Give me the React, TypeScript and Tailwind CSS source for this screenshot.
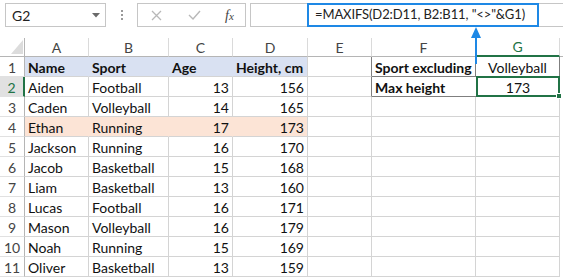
import React from "react"

type Row = { name: string; sport: string; age: number; height: number; peach?: boolean }

const rows: Row[] = [
    { name: "Aiden", sport: "Football", age: 13, height: 156 },
    { name: "Caden", sport: "Volleyball", age: 14, height: 165 },
    { name: "Ethan", sport: "Running", age: 17, height: 173, peach: true },
    { name: "Jackson", sport: "Running", age: 16, height: 170 },
    { name: "Jacob", sport: "Basketball", age: 15, height: 168 },
    { name: "Liam", sport: "Basketball", age: 13, height: 160 },
    { name: "Lucas", sport: "Football", age: 16, height: 171 },
    { name: "Mason", sport: "Volleyball", age: 16, height: 179 },
    { name: "Noah", sport: "Running", age: 15, height: 169 },
    { name: "Oliver", sport: "Basketball", age: 13, height: 159 },
]

const font = { fontFamily: "Lato, 'Liberation Sans', sans-serif" }

/** Top bar: name box, buttons and formula input */
function FormulaBar() {
    return (
        <div className="relative flex h-[38px] items-start bg-white pt-[3px]">
            {/* name box */}
            <div className="ml-[5px] flex h-[24px] w-[101px] items-center justify-between border border-[#c6c6c6] pl-[6px] pr-[5px] text-[14px] text-[#222]">
                <span>G2</span>
                <svg width="8" height="5" viewBox="0 0 8 5"><path d="M0 0h8L4 4.5z" fill="#6a6a6a" /></svg>
            </div>
            <div className="flex h-[24px] w-[31px] flex-col items-center justify-center gap-[2px]">
                <span className="h-[2px] w-[2px] bg-[#9a9a9a]" />
                <span className="h-[2px] w-[2px] bg-[#9a9a9a]" />
                <span className="h-[2px] w-[2px] bg-[#9a9a9a]" />
            </div>
            {/* cancel / enter / fx */}
            <div className="flex h-[24px] w-[109px] items-center border border-[#c6c6c6]">
                <svg className="ml-[13px]" width="11" height="11" viewBox="0 0 11 11">
                    <path d="M1 1l9 9M10 1l-9 9" stroke="#b8b8b8" strokeWidth="1.3" />
                </svg>
                <svg className="ml-[26px]" width="13" height="10" viewBox="0 0 13 10">
                    <path d="M1 5l4 4 7-8" stroke="#b8b8b8" strokeWidth="1.4" fill="none" />
                </svg>
                <span
                    className="ml-[24px] text-[14px] italic text-[#444]"
                    style={{ fontFamily: "'Liberation Serif', serif" }}
                >
                    f<span className="text-[11px]">x</span>
                </span>
            </div>
            {/* formula input */}
            <div className="ml-[4px] flex h-[24px] flex-1 items-center border border-r-0 border-[#c6c6c6] pl-[56px]">
                <div className="flex h-[24px] w-[232px] items-center whitespace-nowrap border-2 border-[#1e88e5] pl-[6px] text-[13px] tracking-[-0.1px] text-[#222]">
                    =MAXIFS(D2:D11, B2:B11, "&lt;&gt;"&amp;G1)
                </div>
            </div>
            {/* arrow pointing from G1 to the formula */}
            <svg className="absolute left-[470px] top-[27px] z-10" width="12" height="37" viewBox="0 0 12 37">
                <path d="M6 0L11 11H1z" fill="#1e88e5" />
                <rect x="5" y="9" width="2" height="28" fill="#1e88e5" />
            </svg>
        </div>
    )
}

const widths = [64, 80, 64, 75, 64, 104, 84]
const letters = ["A", "B", "C", "D", "E", "F", "G"]

function ColumnHeader() {
    return (
        <div className="flex h-[19px]">
            <div className="relative h-[19px] w-[25px] border-r border-b border-[#b5b5b5]">
                <svg className="absolute left-[11px] top-[2px]" width="12" height="14" viewBox="0 0 12 14">
                    <path d="M12 0V14H0z" fill="#dcdcdc" />
                </svg>
            </div>
            {letters.map((l, i) => (
                <div
                    key={l}
                    style={{ width: widths[i] }}
                    className={`flex h-[19px] items-center justify-center border-r border-[#dadada] text-[14px] ${l === "G"
                            ? "border-b-2 border-b-[#217346] text-[#217346]"
                            : "border-b border-b-[#b5b5b5] text-[#444]"
                        }`}
                >
                    {l}
                </div>
            ))}
            <div className="h-[19px] flex-1 border-b border-[#b5b5b5]" />
        </div>
    )
}

function Cell({
    w,
    children,
    className = "",
}: {
    w: number
    children?: React.ReactNode
    className?: string
}) {
    return (
        <div
            style={{ width: w }}
            className={`flex h-[20px] items-center overflow-visible whitespace-nowrap border-b border-r border-[#d4d4d4] px-[3px] pt-[1px] text-[14px] text-[#111] ${className}`}
        >
            {children}
        </div>
    )
}

function RowNum({ n, active }: { n: number; active?: boolean }) {
    return (
        <div
            className={`flex h-[20px] w-[25px] items-center justify-center border-b border-[#e1e1e1] pt-[1px] text-[14px] ${active
                    ? "border-r-2 border-r-[#217346] bg-[#e1e1e1] text-[#217346]"
                    : "border-r border-r-[#b5b5b5] text-[#444]"
                }`}
        >
            {n}
        </div>
    )
}

export default function App() {
    const blue = "bg-[#d9e1f2] border-r-[#d9e1f2] font-bold"
    const peach = "bg-[#fce4d6] border-r-[#fce4d6]"
    return (
        <div className="relative h-[278px] w-[563px] overflow-hidden bg-white" style={font}>
            <FormulaBar />
            <ColumnHeader />

            {/* row 1 */}
            <div className="flex">
                <RowNum n={1} />
                <Cell w={64} className={blue}>Name</Cell>
                <Cell w={80} className={blue}>Sport</Cell>
                <Cell w={64} className={blue}>Age</Cell>
                <Cell w={75} className="bg-[#d9e1f2] font-bold">Height, cm</Cell>
                <Cell w={64} className="border-r-[#7f7f7f]" />
                <Cell w={104} className="border-b-[#7f7f7f] border-r-[#7f7f7f] font-bold">Sport excluding</Cell>
                <Cell w={84} className="justify-center border-r-[#7f7f7f] border-b-0">Volleyball</Cell>
            </div>

            {/* rows 2..11 */}
            {rows.map((r, i) => {
                const n = i + 2
                const fill = r.peach ? peach : ""
                return (
                    <div key={r.name} className="flex">
                        <RowNum n={n} active={n === 2} />
                        <Cell w={64} className={fill}>{r.name}</Cell>
                        <Cell w={80} className={fill}>{r.sport}</Cell>
                        <Cell w={64} className={`justify-end ${fill}`}>{r.age}</Cell>
                        <Cell w={75} className={`justify-end ${r.peach ? "bg-[#fce4d6]" : ""}`}>{r.height}</Cell>
                        <Cell w={64} className={n === 2 ? "border-r-[#7f7f7f]" : ""} />
                        {n === 2 ? (
                            <>
                                <Cell w={104} className="border-b-[#7f7f7f] border-r-0 font-bold">Max height</Cell>
                                <div className="relative flex h-[21px] w-[84px] -mt-[1px] items-center justify-center border-2 border-[#217346] pt-[1px] text-[14px] text-[#111]">
                                    173
                                    <span className="absolute -bottom-[4px] -right-[4px] h-[6px] w-[6px] border border-white bg-[#217346]" />
                                </div>
                            </>
                        ) : (
                            <>
                                <Cell w={104} />
                                <Cell w={84} />
                            </>
                        )}
                    </div>
                )
            })}
        </div>
    )
}
